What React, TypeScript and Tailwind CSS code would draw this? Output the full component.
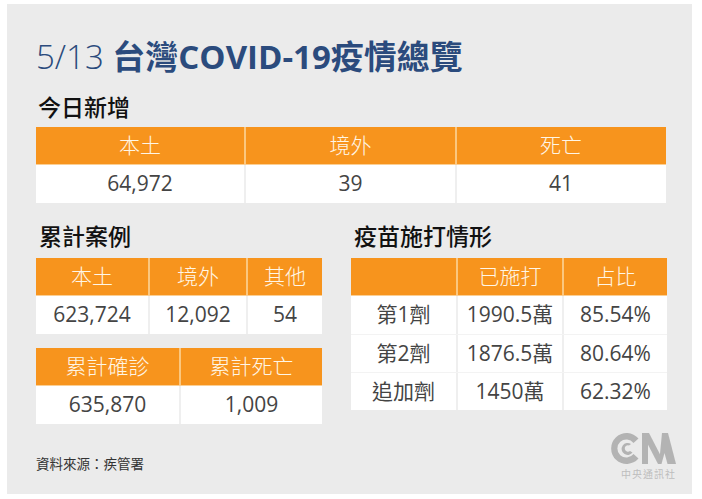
import type { ReactNode } from "react";

const cjk = { fontFamily: '"Open Sans", "Noto Sans CJK TC", sans-serif' };

function HeadCell({ children, first }: { children?: ReactNode; first?: boolean }) {
  return (
    <div
      className={`flex h-full items-center justify-center text-[21px] font-light text-[#fff6e6] ${
        first ? "" : "border-l-2 border-[#fbc77f]"
      }`}
    >
      {children}
    </div>
  );
}

function BodyCell({ children, first }: { children?: ReactNode; first?: boolean }) {
  return (
    <div
      className={`flex h-full items-center justify-center text-[21px] text-[#444] ${
        first ? "" : "border-l-2 border-[#efefef]"
      }`}
    >
      {children}
    </div>
  );
}

function Table({
  cols,
  head,
  rows,
}: {
  cols: string;
  head: string[];
  rows: string[][];
}) {
  return (
    <div>
      <div className={`grid h-[38px] bg-[#f7941d] border-b border-[#fbcf94] ${cols}`}>
        {head.map((h, i) => (
          <HeadCell key={i} first={i === 0}>
            {h}
          </HeadCell>
        ))}
      </div>
      {rows.map((r, ri) => (
        <div
          key={ri}
          className={`grid h-[38px] bg-white ${ri > 0 ? "border-t border-[#f3f3f3]" : ""} ${cols}`}
        >
          {r.map((c, i) => (
            <BodyCell key={i} first={i === 0}>
              {c}
            </BodyCell>
          ))}
        </div>
      ))}
    </div>
  );
}

// CNA mark, roughly traced
function CnaLogo() {
  return (
    <div className="flex flex-col items-end">
      <svg width="65" height="31" viewBox="0 0 65 31" fill="#b3b3b3">
        <path d="M27.5 5.5 A15.5 15.5 0 1 0 27.5 25.5 L22.5 21 A9 9 0 1 1 22.5 10 Z" />
        <path d="M20 11 A6 6 0 1 0 21.5 19.5 L19 18 A3.2 3.2 0 1 1 18 12.5 Z" />
        <rect x="31" y="0" width="6" height="31" />
        <polygon points="31,0 38,0 54,31 47,31" />
        <polygon points="51,0 57,0 65,31 48,31" />
        <polygon points="53.5,20 56.5,31 50.5,31" fill="#ebebeb" />
      </svg>
      <div
        className="mt-[5px] text-[10px] leading-[10px] tracking-[1px] text-[#bdbdbd]"
        style={{ fontFamily: '"Noto Sans CJK TC", sans-serif' }}
      >
        中央通訊社
      </div>
    </div>
  );
}

export default function App() {
  return (
    <div className="h-[499px] w-[702px] bg-white pl-[7px] pt-[4px]" style={cjk}>
      <div className="h-[490px] w-[685px] bg-[#ebebeb] pl-[29px] pr-[26px]">
        <h1 className="pt-[33px] text-[33px] leading-[40px] text-[#2b4b7d]">
          <span className="font-light">5/13 </span>
          <span className="font-bold">台灣COVID-19疫情總覽</span>
        </h1>

        <h2 className="mt-[15px] pl-[2px] text-[23px] font-medium leading-[30px] text-[#111]">今日新增</h2>
        <div className="mt-[5px]">
          <Table cols="grid-cols-[208px_211px_210px]" head={["本土", "境外", "死亡"]} rows={[["64,972", "39", "41"]]} />
        </div>

        <div className="mt-[18px] flex gap-[29px]">
          <div className="w-[286px]">
            <h2 className="pl-[3px] text-[23px] font-medium leading-[30px] text-[#111]">累計案例</h2>
            <div className="mt-[7px]">
              <Table
                cols="grid-cols-[112px_98px_76px]"
                head={["本土", "境外", "其他"]}
                rows={[["623,724", "12,092", "54"]]}
              />
            </div>
            <div className="mt-[14px]">
              <Table
                cols="grid-cols-[143px_143px]"
                head={["累計確診", "累計死亡"]}
                rows={[["635,870", "1,009"]]}
              />
            </div>
          </div>
          <div className="w-[316px]">
            <h2 className="pl-[3px] text-[23px] font-medium leading-[30px] text-[#111]">疫苗施打情形</h2>
            <div className="mt-[7px]">
              <Table
                cols="grid-cols-[105px_106px_105px]"
                head={["", "已施打", "占比"]}
                rows={[
                  ["第1劑", "1990.5萬", "85.54%"],
                  ["第2劑", "1876.5萬", "80.64%"],
                  ["追加劑", "1450萬", "62.32%"],
                ]}
              />
            </div>
          </div>
        </div>

        <div className="mt-[9px] -mr-[10px] flex items-end justify-between">
          <div className="pb-[5px] text-[13.5px] text-[#333]">資料來源：疾管署</div>
          <CnaLogo />
        </div>
      </div>
    </div>
  );
}
